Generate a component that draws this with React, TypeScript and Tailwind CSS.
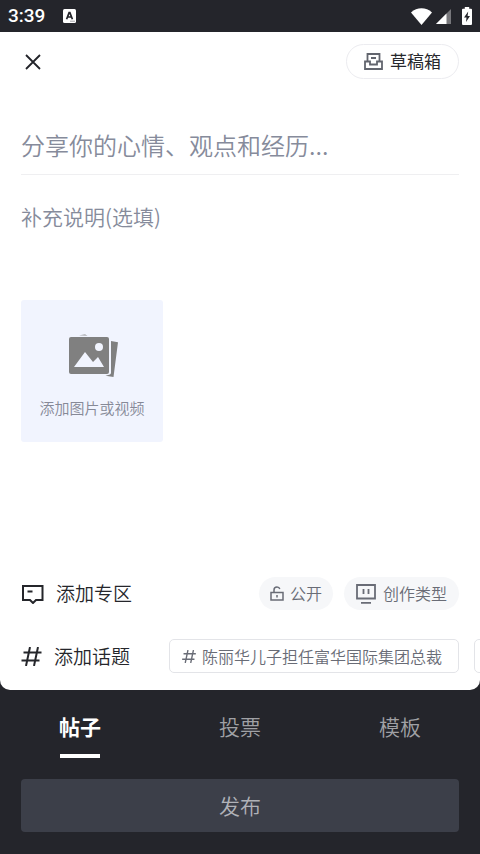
import React, { useState } from "react";
import clsx from "clsx";

type POST_TABS = "POST" | "VOTE" | "TEMPLATE";

const tabList: { label: string; value: POST_TABS }[] = [
  { label: "帖子", value: "POST" },
  { label: "投票", value: "VOTE" },
  { label: "模板", value: "TEMPLATE" },
];

const HashIcon = ({ className }: { className?: string }) => (
  <svg viewBox="0 0 20 19" className={className} fill="none" stroke="currentColor" strokeWidth="2">
    <path d="M8.5 0 4.5 19M16.5 0l-4 19M2 5.5h18M0 13.5h18" />
  </svg>
);

const StatusBar = () => (
  <div className="flex h-8 items-center justify-between bg-[#24252b] px-2 text-white">
    <div className="flex items-center gap-[18px]">
      <span className="font-['Roboto',sans-serif] text-[19px] font-medium leading-8">3:39</span>
      <svg viewBox="0 0 13 14" className="h-[14px] w-[13px]">
        <rect width="13" height="14" rx="1.5" fill="#fff" />
        <path d="M3.6 10.2 6.1 3.6h.8l2.5 6.6M4.6 8h3.8" fill="none" stroke="#24252b" strokeWidth="1.7" />
        <path d="M7 12.2h5" stroke="#8b8b90" strokeWidth=".8" />
      </svg>
    </div>
    <div className="flex items-center">
      <svg viewBox="0 0 21 17" className="h-[17px] w-[21px]">
        <path d="M0 4.4C6 -1.2 15 -1.2 21 4.4L10.5 17z" fill="#fff" />
      </svg>
      <svg viewBox="0 0 15 15" className="ml-1 h-[15px] w-[15px]">
        <path d="M15 0v15H0z" fill="#77777b" />
        <path d="M10.5 4.5V15H0z" fill="#fff" />
      </svg>
      <svg viewBox="0 0 10 18" className="ml-[11px] h-[18px] w-[10px]">
        <path d="M2.8 0h4.4v1.8H9q1 0 1 1V17q0 1-1 1H1q-1 0-1-1V2.8q0-1 1-1h1.8z" fill="#fff" />
        <path d="M6.2 4.5 2 10.5h2.5L4 15l4-6H5.6z" fill="#24252b" />
      </svg>
    </div>
  </div>
);

const TopBar = () => (
  <header className="flex items-center justify-between px-[21px] pt-3">
    <button type="button" aria-label="关闭" className="p-1 text-[#222329]">
      <svg viewBox="0 0 16 16" className="h-4 w-4" fill="none" stroke="currentColor" strokeWidth="1.8">
        <path d="m1 1 14 14M15 1 1 15" />
      </svg>
    </button>
    <button
      type="button"
      className="flex h-[35px] items-center gap-[7px] rounded-full border border-[#ececf0] px-[17px] text-[17px] font-normal text-[#27282d]"
    >
      <svg viewBox="0 0 19 17" className="h-[17px] w-[19px]" fill="none" stroke="#62656e" strokeWidth="1.8">
        <path d="M3.5 9V1h12v8M7 5h5" />
        <path d="M1 8.5h5v3h7v-3h5V16H1z" />
      </svg>
      <span className="pb-px leading-5">草稿箱</span>
    </button>
  </header>
);

const UploadButton = () => (
  <button
    type="button"
    className="flex size-[142px] flex-col items-center justify-center gap-[19px] rounded-[3px] bg-[#f1f4fe] pt-3 text-[15px] leading-6 text-[#868997]"
  >
    <svg viewBox="0 0 49 43" className="ml-[2px] h-[43px] w-[49px]">
      <path d="M10 1.2 16 .4l2.5 1.1zM42 7l7 1.2L44.5 43l-8-1.2 4.5-1.3q1-.5 1-2z" fill="#808080" />
      <rect y="3" width="40" height="37" rx="2" fill="#808080" />
      <circle cx="30" cy="13" r="4" fill="#f1f4fe" />
      <path d="M5 33 16 18l8 10 5-5 6 10z" fill="#f1f4fe" />
    </svg>
    <span>添加图片或视频</span>
  </button>
);

const OptionRows = () => (
  <div className="flex flex-col gap-[29px] pb-[17px] pl-[21px]">
    <div className="flex items-center justify-between pr-[21px]">
      <button type="button" className="flex items-center gap-3 text-[19px] leading-8 text-[#25262b]">
        <svg viewBox="0 0 23 20" className="h-5 w-[23px]" fill="none" stroke="currentColor" strokeWidth="2">
          <path d="M2 2h19.5v14H15l-3 3-3-3H2zM6.5 7.5h5" />
        </svg>
        <span className="pb-px">添加专区</span>
      </button>
      <div className="flex items-center gap-[11px] text-base text-[#696c76]">
        <button type="button" className="flex h-[33px] items-center gap-[6px] rounded-full bg-[#f6f7f9] px-[11px]">
          <svg viewBox="0 0 14 15" className="h-[15px] w-[14px]" fill="none" stroke="currentColor" strokeWidth="1.5">
            <path d="M1 6.5h12V14H1zM4 6.5V4q0-3 3-3 2.2 0 2.8 2M7 9v2.5" />
          </svg>
          <span className="pb-px leading-5">公开</span>
        </button>
        <button type="button" className="flex h-[33px] items-center gap-[7px] rounded-full bg-[#f6f7f9] px-3">
          <svg viewBox="0 0 20 20" className="size-5" fill="none" stroke="currentColor" strokeWidth="1.8">
            <path d="M1 1h18v13.5H1zM7.5 5v5M12.5 5v5M5 18.8h10" />
          </svg>
          <span className="pb-px leading-5">创作类型</span>
        </button>
      </div>
    </div>
    <div className="flex items-center overflow-hidden">
      <button type="button" className="flex shrink-0 items-center gap-3 text-[19px] leading-8 text-[#25262b]">
        <HashIcon className="h-[19px] w-[21px]" />
        <span>添加话题</span>
      </button>
      <div className="ml-[39px] flex gap-[15px]">
        <button
          type="button"
          className="flex h-[34px] shrink-0 items-center gap-[6px] whitespace-nowrap rounded-[5px] border border-[#e3e4e8] pl-3 pr-4 text-base text-[#696c76]"
        >
          <HashIcon className="h-[13px] w-[14px]" />
          <span className="pb-px leading-5">陈丽华儿子担任富华国际集团总裁</span>
        </button>
        <button
          type="button"
          aria-label="更多话题"
          className="h-[34px] w-40 shrink-0 rounded-[5px] border border-[#e3e4e8]"
        />
      </div>
    </div>
  </div>
);

const App = () => {
  const [activeTab, setActiveTab] = useState<POST_TABS>("POST");
  const [title, setTitle] = useState<string>("");
  const [detail, setDetail] = useState<string>("");

  return (
    <div className="flex min-h-screen flex-col bg-[#24252b] font-['Noto_Sans_CJK_SC',sans-serif] font-[350]">
      <StatusBar />
      <main className="flex flex-1 flex-col rounded-b-[10px] bg-white">
        <TopBar />
        <div className="flex flex-1 flex-col px-[21px] pt-9">
          <input
            type="text"
            aria-label="标题"
            value={title}
            onChange={(e) => setTitle(e.target.value)}
            placeholder="分享你的心情、观点和经历..."
            className="h-[60px] w-full border-b border-[#efeff1] text-2xl outline-none placeholder:text-[#868b9b]"
          />
          <textarea
            aria-label="补充说明"
            value={detail}
            onChange={(e) => setDetail(e.target.value)}
            placeholder="补充说明(选填)"
            className="mt-[25px] h-[100px] w-full resize-none text-[21px] leading-8 outline-none placeholder:text-[#868b9b]"
          />
          <div>
            <UploadButton />
          </div>
        </div>
        <OptionRows />
      </main>
      <footer className="px-[21px] pb-[22px]">
        <nav className="-mx-[21px] grid grid-cols-3 pt-[18px]">
          {tabList.map((tab) => (
            <button
              key={tab.value}
              type="button"
              onClick={() => setActiveTab(tab.value)}
              className={clsx(
                "flex flex-col items-center gap-[10px] text-[21px] leading-9",
                activeTab === tab.value ? "font-bold text-white" : "text-[#a0a1a5]",
              )}
            >
              <span>{tab.label}</span>
              <span className={clsx("h-1 w-10", activeTab === tab.value && "bg-white")} />
            </button>
          ))}
        </nav>
        <button
          type="button"
          className="mt-[21px] h-[53px] w-full rounded-[4px] bg-[#3c3f49] text-[21px] text-[#b0b2b8]"
        >
          发布
        </button>
      </footer>
    </div>
  );
};

export default App;
